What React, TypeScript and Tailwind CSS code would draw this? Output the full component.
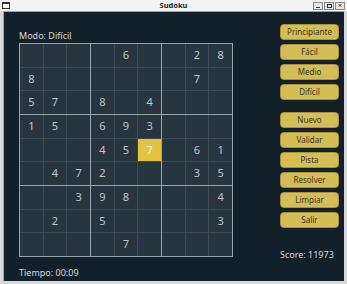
import React from 'react'

const board: (number | null)[][] = [
  [null, null, null, null, 6, null, null, 2, 8],
  [8, null, null, null, null, null, null, 7, null],
  [5, 7, null, 8, null, 4, null, null, null],
  [1, 5, null, 6, 9, 3, null, null, null],
  [null, null, null, 4, 5, 7, null, 6, 1],
  [null, 4, 7, 2, null, null, null, 3, 5],
  [null, null, 3, 9, 8, null, null, null, 4],
  [null, 2, null, 5, null, null, null, null, 3],
  [null, null, null, null, 7, null, null, null, null],
]

const levels = ['Principiante', 'Fácil', 'Medio', 'Difícil']
const actions = ['Nuevo', 'Validar', 'Pista', 'Resolver', 'Limpiar', 'Salir']

function Btn({ label }: { label: string }) {
  return (
    <button className="w-[59px] h-[16px] rounded-[4px] bg-[#d3bd57] border border-[#a8923a] text-[8px] leading-none text-[#3b3424]">
      {label}
    </button>
  )
}

function Block({ br, bc }: { br: number; bc: number }) {
  const cells = []
  for (let r = 0; r < 3; r++) {
    for (let c = 0; c < 3; c++) {
      const row = br * 3 + r
      const col = bc * 3 + c
      const v = board[row][col]
      const sel = row === 4 && col === 5
      cells.push(
        <div
          key={`${r}-${c}`}
          className={`flex items-center justify-center text-[11px] ${sel ? 'bg-[#e2c441] text-[#f4f0e0]' : 'bg-[#29353e] text-[#bfc6ca]'}`}
        >
          {v ?? ''}
        </div>
      )
    }
  }
  return <div className="grid grid-cols-3 grid-rows-3 gap-px bg-[#3c4952]">{cells}</div>
}

export default function App() {
  return (
    <div className="w-[347px] h-[284px] flex flex-col bg-[#d9d9d9] font-['Noto_Sans',sans-serif]">
      {/* title bar */}
      <div className="h-[11px] flex items-center justify-between bg-[#f3f3f3] px-[2px] relative">
        <div className="w-[8px] h-[7px] border border-[#333] border-t-2" />
        <span className="absolute left-1/2 -translate-x-1/2 text-[7.5px] font-bold leading-none text-[#222]">Sudoku</span>
        <div className="flex gap-px">
          <div className="w-[10px] h-[8px] border border-[#888] bg-[#e8e8e8] flex items-end justify-center pb-px">
            <div className="w-[4px] h-px bg-[#333]" />
          </div>
          <div className="w-[10px] h-[8px] border border-[#888] bg-[#e8e8e8] flex items-center justify-center">
            <div className="w-[5px] h-[4px] border border-[#333]" />
          </div>
          <div className="w-[10px] h-[8px] border border-[#888] bg-[#e8e8e8] flex items-center justify-center text-[7px] leading-none text-[#222]">
            ×
          </div>
        </div>
      </div>
      {/* body */}
      <div className="flex-1 mx-[3px] mb-[3px] border-l border-t border-[#9aa] bg-[#13202a] flex">
        <div className="flex flex-col pl-[15px] pt-[19px]">
          <div className="text-[9px] leading-none text-[#d6dadc] h-[12px]">Modo: Difícil</div>
          <div className="w-[214px] h-[214px] border border-[#9aa8ae] bg-[#9aa8ae] grid grid-cols-3 grid-rows-3 gap-px">
            {[0, 1, 2].map((br) => [0, 1, 2].map((bc) => <Block key={`${br}${bc}`} br={br} bc={bc} />))}
          </div>
          <div className="text-[9px] leading-none text-[#d6dadc] mt-[11px]">Tiempo: 00:09</div>
        </div>
        <div className="flex flex-col pl-[47px] pt-[12px]">
          <div className="flex flex-col gap-[4px]">
            {levels.map((l) => (
              <Btn key={l} label={l} />
            ))}
          </div>
          <div className="flex flex-col gap-[4px] mt-[12px]">
            {actions.map((l) => (
              <Btn key={l} label={l} />
            ))}
          </div>
          <div className="text-[9px] leading-none text-[#d6dadc] mt-[22px]">Score: 11973</div>
        </div>
      </div>
    </div>
  )
}
